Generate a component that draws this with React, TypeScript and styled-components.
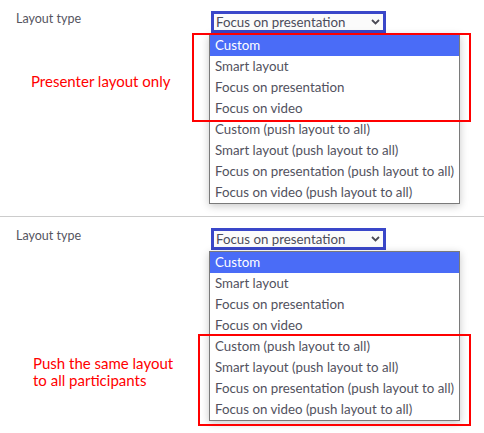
import React from "react";
import styled, { createGlobalStyle } from "styled-components";

const Global = createGlobalStyle`
  html, body { margin: 0; padding: 0; background: #ffffff; }
  body { font-family: "Lato", "Liberation Sans", sans-serif; }
`;

const Page = styled.div`
  width: 484px;
  display: flex;
  flex-direction: column;
`;

const Section = styled.section<{ $height: number; $divider?: boolean }>`
  height: ${(p) => p.$height}px;
  box-sizing: border-box;
  display: flex;
  padding: 11px 0 0 16px;
  border-bottom: ${(p) => (p.$divider ? "1px solid #cccccc" : "none")};
`;

const LeftColumn = styled.div`
  width: 195px;
  display: flex;
  flex-direction: column;
`;

const Label = styled.div`
  font-size: 12.5px;
  line-height: 16px;
  color: #55555f;
`;

const Note = styled.div<{ $top: number; $left: number }>`
  margin-top: ${(p) => p.$top}px;
  margin-left: ${(p) => p.$left}px;
  font-size: 15px;
  line-height: 17px;
  color: #ff0000;
`;

const Field = styled.div`
  display: flex;
  flex-direction: column;
  position: relative;
`;

const Select = styled.div`
  width: 175px;
  height: 22px;
  box-sizing: border-box;
  border: 3px solid #3a47c9;
  background: #fbfbfb;
  display: flex;
  align-items: center;
  justify-content: space-between;
  padding: 0 3px 0 2px;
  font-size: 13.3px;
  color: #4c4c5a;
`;

const SelectValue = styled.span`
  white-space: nowrap;
  flex: none;
`;

const Menu = styled.div`
  margin: 1px 0 0 -2px;
  width: 251px;
  box-sizing: border-box;
  border: 1px solid #7a7a7a;
  background: #ffffff;
  box-shadow: 0 2px 8px rgba(0, 0, 0, 0.22);
  display: flex;
  flex-direction: column;
`;

const Option = styled.div<{ $active?: boolean }>`
  height: 21px;
  line-height: 20px;
  padding-left: 5px;
  font-size: 13.3px;
  white-space: nowrap;
  color: ${(p) => (p.$active ? "#ffffff" : "#52525e")};
  background: ${(p) => (p.$active ? "#4a6cf7" : "transparent")};
`;

const Highlight = styled.div<{ $top: number; $left: number; $width: number; $height: number }>`
  position: absolute;
  top: ${(p) => p.$top}px;
  left: ${(p) => p.$left}px;
  width: ${(p) => p.$width}px;
  height: ${(p) => p.$height}px;
  box-sizing: border-box;
  border: 2px solid #ff0000;
  pointer-events: none;
`;

const Chevron = () => (
  <svg width="9" height="6" viewBox="0 0 9 6">
    <path d="M1 1 L4.5 4.5 L8 1" fill="none" stroke="#4a4a55" strokeWidth="1.8" />
  </svg>
);

const options = [
  "Custom",
  "Smart layout",
  "Focus on presentation",
  "Focus on video",
  "Custom (push layout to all)",
  "Smart layout (push layout to all)",
  "Focus on presentation (push layout to all)",
  "Focus on video (push layout to all)",
];

type Box = { top: number; left: number; width: number; height: number };

const LayoutField = ({ box }: { box: Box }) => (
  <Field>
    <Select>
      <SelectValue>Focus on presentation</SelectValue>
      <Chevron />
    </Select>
    <Menu>
      {options.map((o, i) => (
        <Option key={o} $active={i === 0}>
          {o}
        </Option>
      ))}
    </Menu>
    <Highlight $top={box.top} $left={box.left} $width={box.width} $height={box.height} />
  </Field>
);

export default function App() {
  return (
    <Page>
      <Global />
      <Section $height={217} $divider>
        <LeftColumn>
          <Label>Layout type</Label>
          <Note $top={46} $left={15}>Presenter layout only</Note>
        </LeftColumn>
        <LayoutField box={{ top: 22, left: -19, width: 279, height: 89 }} />
      </Section>
      <Section $height={216}>
        <LeftColumn>
          <Label>Layout type</Label>
          <Note $top={111} $left={17}>
            Push the same layout
            <br />
            to all participants
          </Note>
        </LeftColumn>
        <LayoutField box={{ top: 106, left: -13, width: 273, height: 92 }} />
      </Section>
    </Page>
  );
}
